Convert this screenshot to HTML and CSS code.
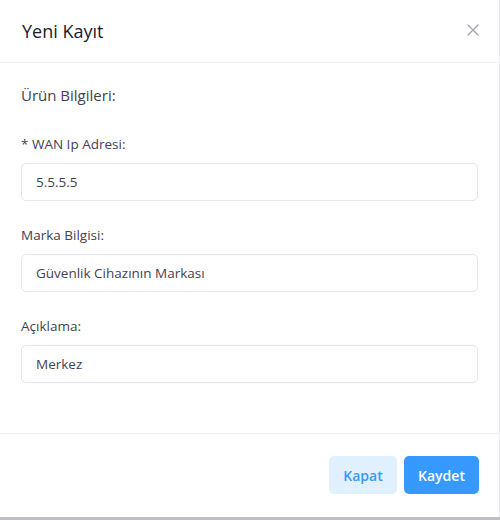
FILE: index.html
```html
<!DOCTYPE html>
<html lang="tr">
<head>
<meta charset="utf-8">
<title>Yeni Kayıt</title>
<link rel="stylesheet" href="styles.css">
</head>
<body>
<div class="modal">
  <div class="modal-header">
    <h3 class="modal-title">Yeni Kayıt</h3>
    <button class="close" aria-label="Kapat">
      <svg width="12" height="12" viewBox="0 0 12 12"><path d="M1 1 L11 11 M11 1 L1 11" stroke="#a1a5b7" stroke-width="1.4" stroke-linecap="round" fill="none"/></svg>
    </button>
  </div>
  <div class="modal-body">
    <div class="section-title">Ürün Bilgileri:</div>
    <div class="field">
      <label class="label">* WAN Ip Adresi:</label>
      <div class="input">5.5.5.5</div>
    </div>
    <div class="field">
      <label class="label">Marka Bilgisi:</label>
      <div class="input">Güvenlik Cihazının Markası</div>
    </div>
    <div class="field">
      <label class="label">Açıklama:</label>
      <div class="input">Merkez</div>
    </div>
  </div>
  <div class="modal-footer">
    <button class="btn btn-light">Kapat</button>
    <button class="btn btn-primary">Kaydet</button>
  </div>
</div>
<div class="backdrop"></div>
</body>
</html>
```
FILE: styles.css
```css
html, body {
  margin: 0;
  padding: 0;
  background: #ffffff;
  font-family: "Open Sans", "Liberation Sans", sans-serif;
}
.modal {
  width: 500px;
  height: 517px;
  background: #ffffff;
  display: flex;
  flex-direction: column;
  box-sizing: border-box;
  border-right: 1px solid #e9e9ee;
}
.modal-header {
  height: 63px;
  box-sizing: border-box;
  display: flex;
  align-items: center;
  justify-content: space-between;
  padding: 0 19px 0 22px;
  border-bottom: 1px solid #eff2f5;
}
.modal-title {
  margin: 0;
  font-size: 18px;
  font-weight: 500;
  color: #181c32;
}
.close {
  border: 0;
  background: none;
  padding: 0;
  width: 14px;
  height: 14px;
  display: flex;
  align-items: center;
  justify-content: center;
  margin-top: -2px;
}
.modal-body {
  padding: 21px 21px 0 21px;
  flex: 1;
}
.section-title {
  font-size: 15px;
  line-height: 22px;
  color: #3f4254;
  font-weight: 500;
  margin-bottom: 28px;
}
.field {
  margin-bottom: 24px;
}
.label {
  display: block;
  font-size: 13.5px;
  line-height: 20px;
  color: #3f4254;
  margin-bottom: 9px;
}
.input {
  height: 38px;
  box-sizing: border-box;
  border: 1px solid #e4e6ef;
  border-radius: 5px;
  padding: 0 14px;
  display: flex;
  align-items: center;
  font-size: 13.5px;
  color: #3f4254;
}
.modal-footer {
  height: 84px;
  box-sizing: border-box;
  border-top: 1px solid #ebedf3;
  display: flex;
  justify-content: flex-end;
  align-items: flex-start;
  gap: 7px;
  padding: 22px 20px 0 0;
}
.btn {
  height: 38px;
  border: 0;
  border-radius: 5px;
  font-family: inherit;
  font-size: 14px;
  font-weight: 600;
  padding: 0 13px;
}
.btn-light {
  background: #e1f0ff;
  color: #3699ff;
  width: 68px;
}
.btn-primary {
  background: #3699ff;
  color: #ffffff;
  width: 75px;
}
.backdrop {
  height: 3px;
  background: #bdbdc2;
}
```
